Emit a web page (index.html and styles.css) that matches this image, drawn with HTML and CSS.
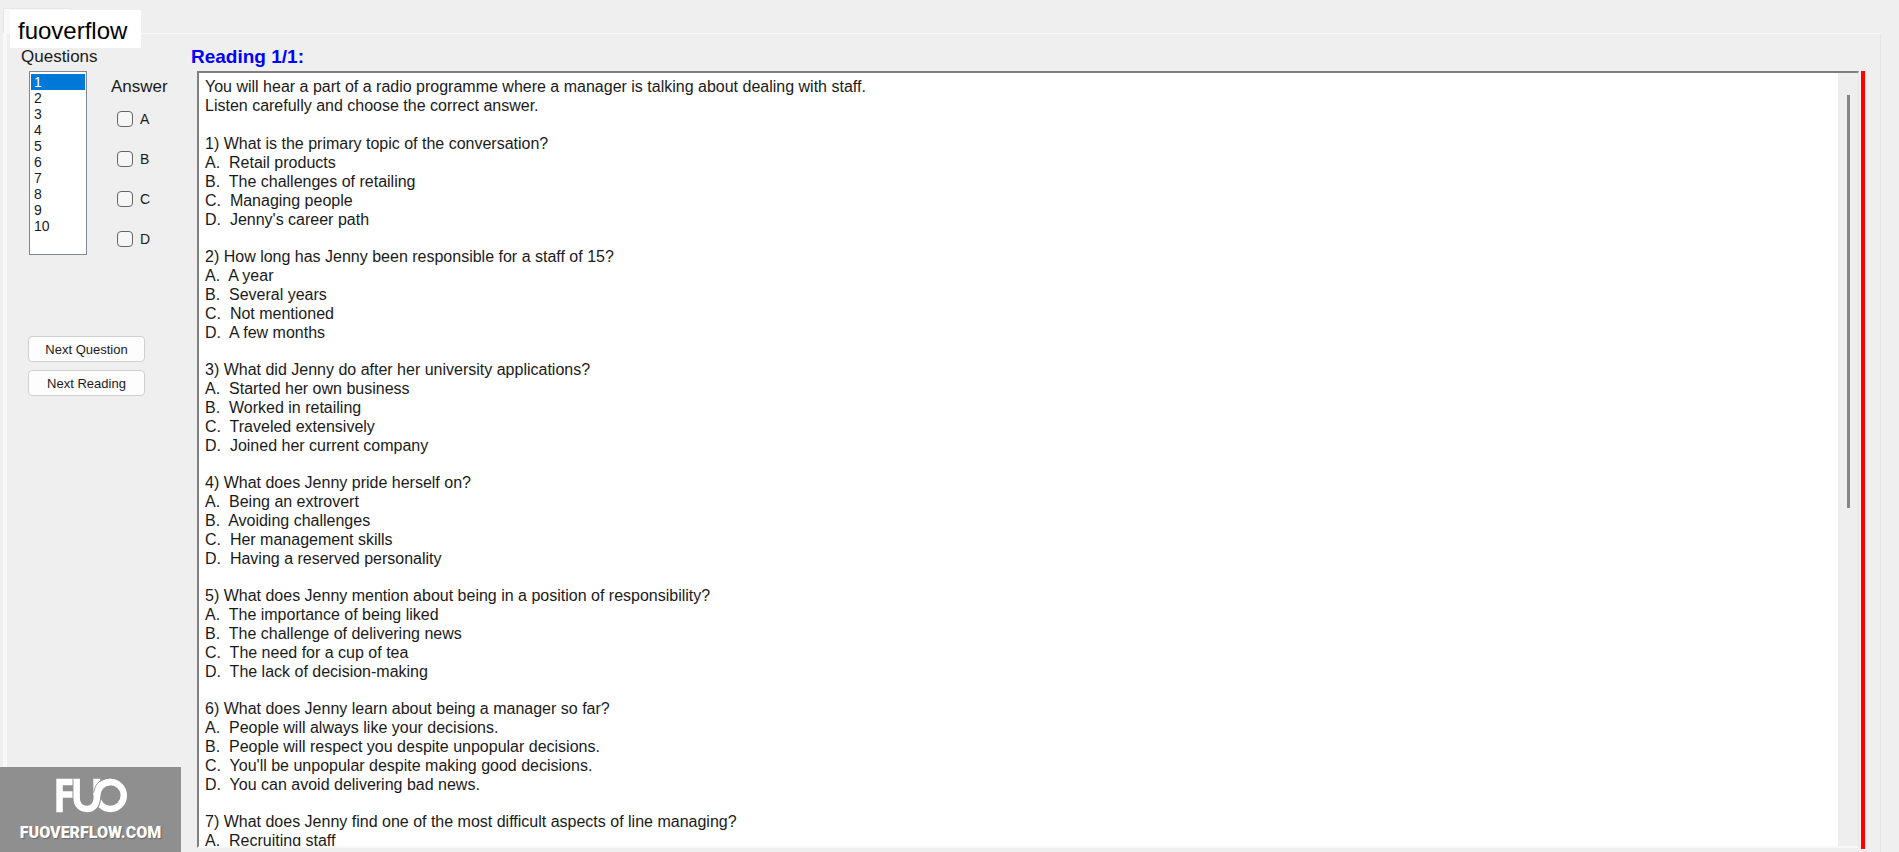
FILE: index.html
```html
<!DOCTYPE html>
<html lang="en">
<head>
  <meta charset="UTF-8" />
  <meta name="viewport" content="width=device-width, initial-scale=1.0"/>
  <title>Reading - fuoverflow</title>
  <link rel="stylesheet" href="styles.css">
</head>
<body>
  <div class="tab"></div>
  <div class="brand">fuoverflow</div>

  <div class="tab-page">
    <aside class="sidebar">
      <label class="label" for="questionList">Questions</label>
      <div class="picker">
        <select id="questionList" class="question-list" size="10">
          <option selected>1</option>
          <option>2</option>
          <option>3</option>
          <option>4</option>
          <option>5</option>
          <option>6</option>
          <option>7</option>
          <option>8</option>
          <option>9</option>
          <option>10</option>
        </select>
        <fieldset class="answers">
          <legend>Answer</legend>
          <label><input type="checkbox" name="answer" value="A">A</label>
          <label><input type="checkbox" name="answer" value="B">B</label>
          <label><input type="checkbox" name="answer" value="C">C</label>
          <label><input type="checkbox" name="answer" value="D">D</label>
        </fieldset>
      </div>
      <div class="buttons">
        <button type="button">Next Question</button>
        <button type="button">Next Reading</button>
      </div>
    </aside>

    <main class="reading">
      <h2>Reading 1/1:</h2>
      <div class="reading-row">
        <div class="reading-box">
          <div class="reading-text">
            <p class="intro">You will hear a part of a radio programme where a manager is talking about dealing with staff.<br>
              Listen carefully and choose the correct answer.</p>
            <p>1) What is the primary topic of the conversation?<br>
              A.&nbsp; Retail products<br>
              B.&nbsp; The challenges of retailing<br>
              C.&nbsp; Managing people<br>
              D.&nbsp; Jenny's career path</p>
            <p>2) How long has Jenny been responsible for a staff of 15?<br>
              A.&nbsp; A year<br>
              B.&nbsp; Several years<br>
              C.&nbsp; Not mentioned<br>
              D.&nbsp; A few months</p>
            <p>3) What did Jenny do after her university applications?<br>
              A.&nbsp; Started her own business<br>
              B.&nbsp; Worked in retailing<br>
              C.&nbsp; Traveled extensively<br>
              D.&nbsp; Joined her current company</p>
            <p>4) What does Jenny pride herself on?<br>
              A.&nbsp; Being an extrovert<br>
              B.&nbsp; Avoiding challenges<br>
              C.&nbsp; Her management skills<br>
              D.&nbsp; Having a reserved personality</p>
            <p>5) What does Jenny mention about being in a position of responsibility?<br>
              A.&nbsp; The importance of being liked<br>
              B.&nbsp; The challenge of delivering news<br>
              C.&nbsp; The need for a cup of tea<br>
              D.&nbsp; The lack of decision-making</p>
            <p>6) What does Jenny learn about being a manager so far?<br>
              A.&nbsp; People will always like your decisions.<br>
              B.&nbsp; People will respect you despite unpopular decisions.<br>
              C.&nbsp; You'll be unpopular despite making good decisions.<br>
              D.&nbsp; You can avoid delivering bad news.</p>
            <p>7) What does Jenny find one of the most difficult aspects of line managing?<br>
              A.&nbsp; Recruiting staff</p>
          </div>
          <div class="scrollbar"><div class="thumb"></div></div>
        </div>
        <div class="red-line"></div>
      </div>
    </main>
  </div>

  <div class="watermark">
    <svg width="80" height="40" viewBox="0 0 80 40" fill="none" stroke="#fff" stroke-width="7">
      <path d="M6 38V5.500H21M6 19H21"/>
      <path d="M42.500 2H50V12L42.500 20Z" fill="#fff" stroke="none"/>
      <circle cx="61" cy="20" r="14.500"/>
      <path d="M24.500 2V23C24.500 30 29 34.500 36 34.500C43 34.500 46.500 29 46.500 21" stroke="#8f8f8f" stroke-width="9"/>
      <path d="M24.500 2V23C24.500 30 29 34.500 36 34.500C43 34.500 46.500 29 46.500 20C47 11 53 5.500 61 5.500"/>
      <path d="M43 17C44 9 48 4 55 2" stroke="#8f8f8f" stroke-width="1"/>
    </svg>
    <span>FUOVERFLOW.COM</span>
  </div>
</body>
</html>
```
FILE: styles.css
```css
* {
  box-sizing: border-box;
}
body {
  display: flex;
  flex-direction: column;
  height: 100vh;
  margin: 0;
  padding: 8px 18px 0 3px;
  overflow: hidden;
  background-color: #efefef;
  color: #1a1a1a;
  font-family: "Liberation Sans", Arial, sans-serif;
  font-size: 16px;
}
.tab {
  flex: none;
  width: 68px;
  height: 25px;
  background-color: #f9f9f9;
  border: 1px solid #e8e8e8;
  border-bottom: none;
}
.brand {
  position: absolute;
  top: 10px;
  left: 10px;
  width: 131px;
  height: 38px;
  padding-left: 8px;
  background-color: #fff;
  color: #000;
  font-size: 24px;
  line-height: 42px;
}
.tab-page {
  flex: 1;
  min-height: 0;
  display: flex;
  padding: 13px 15px 0 0;
  border-left: 4px solid #f8f8f8;
  border-top: 1px solid #f8f8f8;
  border-right: 1px solid #e4e4e4;
}
.sidebar {
  flex: none;
  width: 184px;
}
.label {
  display: block;
  margin: 0 0 4px 14px;
  font-size: 17px;
  line-height: 20px;
}
.picker {
  display: flex;
  align-items: flex-start;
  gap: 24px;
  height: 184px;
  margin-left: 22px;
}
.question-list {
  width: 58px;
  height: 184px;
  padding: 2px 1px;
  border: 1px solid #828790;
  border-radius: 0;
  outline: none;
  overflow: hidden;
  background-color: #fff;
  color: #1a1a1a;
  font-family: inherit;
  font-size: 14px;
}
.question-list option {
  min-height: 16px;
  padding: 0 3px;
  line-height: 16px;
}
.question-list option:checked {
  background: #0078d7 linear-gradient(#0078d7, #0078d7);
  color: #fff;
}
.answers {
  margin: 0;
  padding: 0;
  border: none;
}
.answers legend {
  padding: 6px 0;
  font-size: 17px;
  line-height: 20px;
}
.answers label {
  display: flex;
  align-items: center;
  gap: 7px;
  height: 32px;
  margin: 0 0 8px 6px;
  font-size: 14px;
}
.answers input {
  appearance: none;
  width: 16px;
  height: 16px;
  margin: 0;
  border: 1px solid #666;
  border-radius: 4px;
  background-color: #f6f6f6;
}
.buttons {
  display: flex;
  flex-direction: column;
  gap: 8px;
  width: 117px;
  margin: 81px 0 0 21px;
}
button {
  height: 26px;
  padding: 0;
  border: 1px solid #d0d0d0;
  border-radius: 4px;
  background-color: #fdfdfd;
  color: #1a1a1a;
  font-family: inherit;
  font-size: 13px;
}
.reading {
  flex: 1;
  min-width: 0;
  display: flex;
  flex-direction: column;
}
h2 {
  margin: 0 0 4px;
  color: #0000ff;
  font-size: 19px;
  line-height: 20px;
}
.reading-row {
  flex: 1;
  min-height: 0;
  display: flex;
  gap: 2px;
  padding: 0 0 3px 6px;
}
.reading-box {
  flex: 1;
  display: flex;
  overflow: hidden;
  margin-bottom: 1px;
  border: 2px solid #808080;
  border-right: 1px solid #e4e4e4;
  border-bottom-color: #f8f8f8;
  background-color: #fff;
}
.reading-text {
  flex: 1;
  padding: 4px 6px;
  line-height: 19px;
}
.reading-text p {
  margin: 0 0 18px;
}
.reading-text .intro {
  margin-bottom: 19px;
}
.scrollbar {
  width: 20px;
  padding: 22px 8px 0 9px;
  background-color: #eee;
}
.thumb {
  height: 55%;
  background-color: #858585;
}
.red-line {
  width: 4px;
  background-color: #f00;
}
.watermark {
  position: absolute;
  left: 0;
  bottom: 0;
  display: flex;
  flex-direction: column;
  align-items: center;
  width: 181px;
  height: 85px;
  padding-top: 10px;
  background-color: #8f8f8f;
  color: #fff;
  font-family: Roboto, "Liberation Sans", sans-serif;
  font-size: 16px;
  font-weight: 900;
  line-height: 38px;
  text-shadow: 1px 1px 1px #666;
}
```
